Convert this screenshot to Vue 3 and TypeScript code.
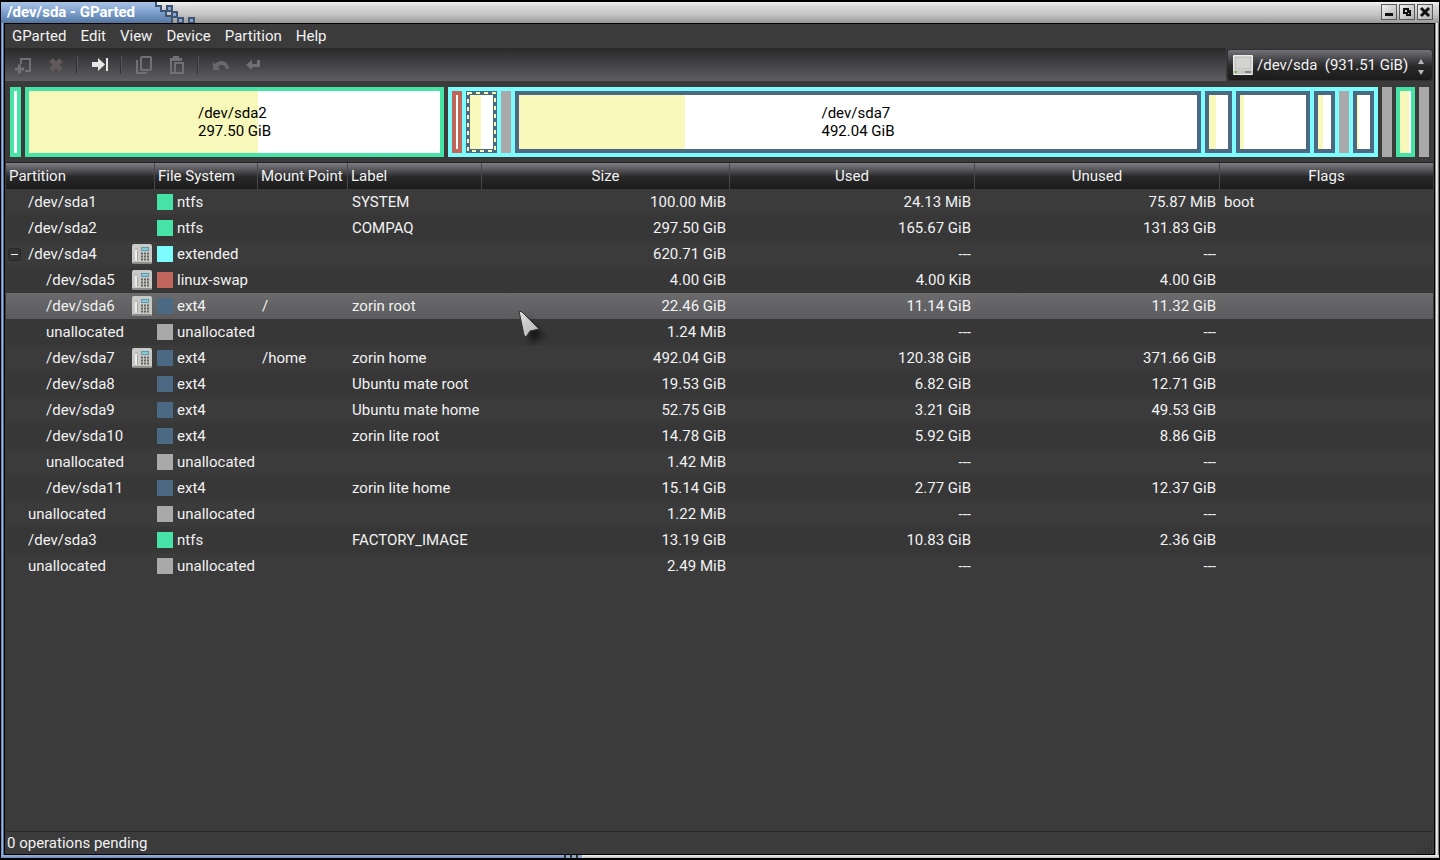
<script setup lang="ts">
import { computed, ref, shallowRef } from 'vue'

type FileSystem = 'ntfs' | 'extended' | 'linux-swap' | 'ext4' | 'unallocated'

interface Partition {
  name: string
  level: number
  locked?: boolean
  fs: FileSystem
  mount?: string
  label?: string
  size: string
  used: string
  unused: string
  flags?: string
}

interface Segment {
  id: string
  fs: FileSystem
  weight: number
  used?: number
  caption?: string
  size?: string
  selected?: boolean
  children?: Segment[]
}

const menus = ['GParted', 'Edit', 'View', 'Device', 'Partition', 'Help']

const segments: Segment[] = [
  { id: 'sda1', fs: 'ntfs', weight: 11 },
  { id: 'sda2', fs: 'ntfs', weight: 419, used: 55.7, caption: '/dev/sda2', size: '297.50 GiB' },
  {
    id: 'sda4',
    fs: 'extended',
    weight: 930,
    children: [
      { id: 'sda5', fs: 'linux-swap', weight: 10 },
      { id: 'sda6', fs: 'ext4', weight: 31, used: 48, selected: true },
      { id: 'free1', fs: 'unallocated', weight: 10 },
      { id: 'sda7', fs: 'ext4', weight: 686, used: 24.5, caption: '/dev/sda7', size: '492.04 GiB' },
      { id: 'sda8', fs: 'ext4', weight: 27, used: 36 },
      { id: 'sda9', fs: 'ext4', weight: 74, used: 6 },
      { id: 'sda10', fs: 'ext4', weight: 21, used: 40 },
      { id: 'free2', fs: 'unallocated', weight: 10 },
      { id: 'sda11', fs: 'ext4', weight: 21, used: 18 },
    ],
  },
  { id: 'free3', fs: 'unallocated', weight: 10 },
  { id: 'sda3', fs: 'ntfs', weight: 19, used: 82 },
  { id: 'free4', fs: 'unallocated', weight: 10 },
]

const partitions: Partition[] = [
  { name: '/dev/sda1', level: 0, fs: 'ntfs', label: 'SYSTEM', size: '100.00 MiB', used: '24.13 MiB', unused: '75.87 MiB', flags: 'boot' },
  { name: '/dev/sda2', level: 0, fs: 'ntfs', label: 'COMPAQ', size: '297.50 GiB', used: '165.67 GiB', unused: '131.83 GiB' },
  { name: '/dev/sda4', level: 0, locked: true, fs: 'extended', size: '620.71 GiB', used: '---', unused: '---' },
  { name: '/dev/sda5', level: 1, locked: true, fs: 'linux-swap', size: '4.00 GiB', used: '4.00 KiB', unused: '4.00 GiB' },
  { name: '/dev/sda6', level: 1, locked: true, fs: 'ext4', mount: '/', label: 'zorin root', size: '22.46 GiB', used: '11.14 GiB', unused: '11.32 GiB' },
  { name: 'unallocated', level: 1, fs: 'unallocated', size: '1.24 MiB', used: '---', unused: '---' },
  { name: '/dev/sda7', level: 1, locked: true, fs: 'ext4', mount: '/home', label: 'zorin home', size: '492.04 GiB', used: '120.38 GiB', unused: '371.66 GiB' },
  { name: '/dev/sda8', level: 1, fs: 'ext4', label: 'Ubuntu mate root', size: '19.53 GiB', used: '6.82 GiB', unused: '12.71 GiB' },
  { name: '/dev/sda9', level: 1, fs: 'ext4', label: 'Ubuntu mate home', size: '52.75 GiB', used: '3.21 GiB', unused: '49.53 GiB' },
  { name: '/dev/sda10', level: 1, fs: 'ext4', label: 'zorin lite root', size: '14.78 GiB', used: '5.92 GiB', unused: '8.86 GiB' },
  { name: 'unallocated', level: 1, fs: 'unallocated', size: '1.42 MiB', used: '---', unused: '---' },
  { name: '/dev/sda11', level: 1, fs: 'ext4', label: 'zorin lite home', size: '15.14 GiB', used: '2.77 GiB', unused: '12.37 GiB' },
  { name: 'unallocated', level: 0, fs: 'unallocated', size: '1.22 MiB', used: '---', unused: '---' },
  { name: '/dev/sda3', level: 0, fs: 'ntfs', label: 'FACTORY_IMAGE', size: '13.19 GiB', used: '10.83 GiB', unused: '2.36 GiB' },
  { name: 'unallocated', level: 0, fs: 'unallocated', size: '2.49 MiB', used: '---', unused: '---' },
]

const device = ref('sda')
const expanded = ref(true)
const selected = shallowRef(partitions[4])
const rows = computed(() => partitions.filter((p) => expanded.value || p.level === 0))

const tracks = (list: Segment[]) => list.map((s) => `minmax(0, ${s.weight}fr)`).join(' ')
</script>

<template>
  <div class="window">
    <header class="titlebar">
      <h1 class="title">/dev/sda - GParted</h1>
      <svg class="pixels" width="42" height="21" viewBox="0 0 42 21" aria-hidden="true">
        <defs>
          <linearGradient id="tab" x1="0" y1="0" x2="0" y2="1">
            <stop offset="0" stop-color="#a9c3e6" />
            <stop offset="0.5" stop-color="#7c9fce" />
            <stop offset="1" stop-color="#54769f" />
          </linearGradient>
        </defs>
        <path d="M0 0H2V4H7V9H12V14H17V21H0Z" fill="url(#tab)" />
        <path d="M1 0V4H6V9H11V14H17V21" fill="none" stroke="#3d5472" stroke-width="2" />
        <g fill="#83a5d0" stroke="#3d5472" stroke-width="2">
          <rect x="12" y="4" width="5" height="5" />
          <rect x="17" y="10" width="5" height="5" />
          <rect x="23" y="16" width="5" height="5" />
          <rect x="34" y="16" width="5" height="5" />
        </g>
      </svg>
      <div class="controls">
        <button type="button" aria-label="Minimize">
          <svg width="16" height="16" viewBox="0 0 16 16"><path d="M4 9H12V12H4Z" fill="#111" /></svg>
        </button>
        <button type="button" aria-label="Restore">
          <svg width="16" height="16" viewBox="0 0 16 16">
            <path d="M4 4H10V6H12V12H7V10H4Z" fill="#111" />
            <path d="M6 6H8V8H6ZM9 9H10V10H9Z" fill="#ccc" />
          </svg>
        </button>
        <button type="button" aria-label="Close">
          <svg width="16" height="16" viewBox="0 0 16 16"><path d="M4 4L12 12M12 4L4 12" stroke="#111" stroke-width="3" /></svg>
        </button>
      </div>
    </header>

    <main class="client">
      <nav class="menubar">
        <button v-for="m in menus" :key="m" type="button">{{ m }}</button>
      </nav>

      <div class="toolrow">
        <div class="toolbar">
          <button type="button" aria-label="New" disabled>
            <svg width="20" height="20" viewBox="0 0 20 20" fill="none" stroke="#717173" stroke-width="2">
              <path d="M8 9V4H17V16H12" /><path d="M2 14H11M6.500 9.500V18.500" stroke-width="3" />
            </svg>
          </button>
          <button type="button" aria-label="Delete" disabled>
            <svg width="20" height="20" viewBox="0 0 20 20"><path d="M5 5L15 15M15 5L5 15" stroke="#625a58" stroke-width="5" /></svg>
          </button>
          <span class="sep"></span>
          <button type="button" aria-label="Resize/Move">
            <svg width="20" height="20" viewBox="0 0 20 20" fill="#e6e6e6">
              <path d="M2 7H8V3L15 9.500L8 16V12H2Z" /><path d="M16 3H18V16H16Z" />
            </svg>
          </button>
          <span class="sep"></span>
          <button type="button" aria-label="Copy" disabled>
            <svg width="20" height="20" viewBox="0 0 20 20" fill="none" stroke="#717173" stroke-width="2">
              <rect x="7" y="2" width="10" height="13" rx="1" /><path d="M3 5V18H13" />
            </svg>
          </button>
          <button type="button" aria-label="Paste" disabled>
            <svg width="20" height="20" viewBox="0 0 20 20" fill="#717173">
              <path d="M3 3H6V1H12V3H15V6H5V17H8V19H3Z" />
              <path fill-rule="evenodd" d="M7 7H17V19H7ZM9 9V17H15V9Z" />
            </svg>
          </button>
          <span class="sep"></span>
          <button type="button" aria-label="Undo" disabled>
            <svg width="20" height="20" viewBox="0 0 20 20">
              <path d="M2 7V15H9L7 12C10 9 13 9 15 14L18 14C17 5 9 4 4 9Z" fill="#68686a" />
            </svg>
          </button>
          <button type="button" aria-label="Apply" disabled>
            <svg width="20" height="20" viewBox="0 0 20 20">
              <path d="M2 10L8 5V9H13V5H16V12H8V15Z" fill="#717173" />
            </svg>
          </button>
        </div>
        <div class="device">
          <svg class="disk" width="20" height="22" viewBox="0 0 20 22" aria-hidden="true">
            <rect x="0" y="1" width="20" height="20" rx="1" fill="#eeeeec" />
            <rect x="2" y="3" width="16" height="12" fill="#d3d3d1" stroke="#b4b4b2" />
            <path d="M0 16H20V20H0Z" fill="#c6c8c2" />
            <path d="M13 17V19M15 17V19M17 17V19" stroke="#444" />
            <rect x="2" y="17" width="2" height="2" fill="#73b13f" />
          </svg>
          <select v-model="device" aria-label="Device">
            <option value="sda">/dev/sda&nbsp;&nbsp;(931.51 GiB)</option>
          </select>
          <svg class="updown" width="8" height="18" viewBox="0 0 8 18" aria-hidden="true">
            <path d="M1 6L4 1L7 6ZM1 12H7L4 17Z" fill="#b9b9bb" />
          </svg>
        </div>
      </div>

      <section class="map" :style="{ gridTemplateColumns: tracks(segments) }" aria-label="Disk layout">
        <div v-for="s in segments" :key="s.id" class="seg" :class="s.fs">
          <div v-if="s.children" class="inner" :style="{ gridTemplateColumns: tracks(s.children) }">
            <div v-for="c in s.children" :key="c.id" class="seg" :class="c.fs">
              <div v-if="c.used" class="used" :style="{ width: c.used + '%' }"></div>
              <p v-if="c.caption" class="caption">{{ c.caption }}<br />{{ c.size }}</p>
              <svg v-if="c.selected" class="dashes" aria-hidden="true">
                <rect x="0" y="0" width="100%" height="100%" />
              </svg>
            </div>
          </div>
          <template v-else>
            <div v-if="s.used" class="used" :style="{ width: s.used + '%' }"></div>
            <p v-if="s.caption" class="caption">{{ s.caption }}<br />{{ s.size }}</p>
          </template>
        </div>
      </section>

      <div class="list">
        <table>
          <colgroup>
            <col class="c-name" /><col class="c-fs" /><col class="c-mount" /><col class="c-label" />
            <col class="c-size" /><col class="c-used" /><col class="c-used" /><col />
          </colgroup>
          <thead>
            <tr>
              <th>Partition</th><th>File System</th><th>Mount Point</th><th>Label</th>
              <th class="mid">Size</th><th class="mid">Used</th><th class="mid">Unused</th><th class="mid">Flags</th>
            </tr>
          </thead>
          <tbody>
            <tr v-for="(p, i) in rows" :key="i" :class="{ selected: p === selected }" @click="selected = p">
              <td>
                <div class="name" :class="{ child: p.level === 1 }">
                  <button
                    v-if="p.fs === 'extended'"
                    class="expander"
                    type="button"
                    aria-label="Toggle children"
                    :aria-expanded="expanded"
                    @click.stop="expanded = !expanded"
                  ></button>
                  <span>{{ p.name }}</span>
                  <svg v-if="p.locked" class="lock" width="20" height="20" viewBox="0 0 20 20" aria-hidden="true">
                    <rect x="0" y="0" width="20" height="20" rx="2" fill="#c9c9c7" />
                    <path d="M1 19H19" stroke="#8c8c8a" stroke-width="2" />
                    <path d="M4 6V16" stroke="#ececea" stroke-width="2" stroke-linecap="round" />
                    <path d="M5.500 7V16M3 5H6" stroke="#a4a4a2" />
                    <rect x="9.500" y="3.500" width="7" height="3" fill="#86cbdc" stroke="#5e9aab" />
                    <path d="M9 9.500H17M9 12.500H17M9 15.500H17" stroke="#62625f" stroke-width="2" stroke-dasharray="2 1" />
                  </svg>
                </div>
              </td>
              <td><div class="fs"><i :class="p.fs"></i>{{ p.fs }}</div></td>
              <td>{{ p.mount }}</td>
              <td>{{ p.label }}</td>
              <td class="num">{{ p.size }}</td>
              <td class="num">{{ p.used }}</td>
              <td class="num">{{ p.unused }}</td>
              <td>{{ p.flags }}</td>
            </tr>
          </tbody>
        </table>
      </div>

      <footer class="status">
        <span>0 operations pending</span>
        <svg class="grip" width="12" height="12" viewBox="0 0 12 12" aria-hidden="true">
          <path d="M10 1H11M7 4H8M10 4H11M4 7H5M7 7H8M10 7H11M1 10H2M4 10H5M7 10H8M10 10H11" stroke="#222" stroke-width="1" />
        </svg>
      </footer>
    </main>

    <div class="edge">
      <span class="edge-blue"></span><span class="edge-marks"></span><span class="edge-grey"></span>
    </div>

    <svg class="pointer" width="46" height="46" viewBox="0 0 46 46" aria-hidden="true">
      <defs>
        <filter id="soft" x="-50%" y="-50%" width="200%" height="200%"><feGaussianBlur stdDeviation="3" /></filter>
        <linearGradient id="arrow" x1="0" y1="0" x2="1" y2="1">
          <stop offset="0" stop-color="#e0e0e0" /><stop offset="1" stop-color="#b0b0b0" />
        </linearGradient>
      </defs>
      <path d="M7 7L27 27L20 28L14 35Z" fill="#000" opacity="0.600" filter="url(#soft)" />
      <path d="M1 1L4 2L21 19L12 21L8 27L6 25Z" fill="url(#arrow)" stroke="#333" stroke-linejoin="round" />
    </svg>
  </div>
</template>

<style>
html,
body {
  margin: 0;
  background: #000;
}
</style>

<style scoped>
* {
  box-sizing: border-box;
}
.window {
  position: relative;
  display: flex;
  flex-direction: column;
  height: 100vh;
  padding: 2px 1px 2px;
  background: #000;
  color: #f2f2f2;
  font: 15px/18px Roboto, 'Noto Sans', sans-serif;
  overflow: hidden;
}
button,
select {
  font: inherit;
  color: inherit;
  border: 0;
  background: none;
  padding: 0;
  margin: 0;
}
svg {
  display: block;
}
.titlebar {
  display: flex;
  flex: none;
  height: 21px;
  background: linear-gradient(#f4f4f4, #d9d9d9 20%, #c4c4c4 60%, #989898);
}
.title {
  margin: 0;
  width: 154px;
  padding-left: 6px;
  font-size: 15px;
  line-height: 20px;
  font-weight: 700;
  color: #fff;
  background: linear-gradient(#a9c3e6, #7c9fce 50%, #54769f);
  white-space: nowrap;
}
.controls {
  display: flex;
  gap: 2px;
  margin-left: auto;
  padding: 2px 6px 0 0;
}
.controls button {
  width: 16px;
  height: 16px;
  background: linear-gradient(135deg, #f2f2f2, #adadad);
  box-shadow: inset 0 0 0 1px #5a5a5a;
}
.client {
  display: flex;
  flex-direction: column;
  flex: 1;
  min-height: 0;
  border: 1px solid #000;
  margin: 0 4px 0 3px;
  background: #3b3b3c;
  position: relative;
  box-shadow: -1px 0 #4b6a92, -2px 0 #9ab8e0, -3px 0 #6c8bb8, 1px 0 #8a8a8a, 2px 0 #f0f0f0, 3px 0 #d5d5d5, 4px 0 #777;
}
.menubar {
  display: flex;
  gap: 14px;
  height: 24px;
  flex: none;
  padding-left: 7px;
}
.toolrow {
  display: flex;
  flex: none;
  height: 33px;
  justify-content: space-between;
}
.toolbar {
  display: flex;
  flex: 1;
  align-items: center;
  padding-left: 1px;
  background: linear-gradient(#29292a, #5e5e62);
}
.toolbar button {
  width: 33px;
  height: 33px;
  display: grid;
  place-items: center;
}
.sep {
  width: 11px;
  height: 18px;
  background: linear-gradient(90deg, transparent 4px, #343436 4px, #343436 5px, #545456 5px, #545456 6px, transparent 6px);
}
.device {
  position: relative;
  width: 204px;
  height: 30px;
  margin: 2px 2px 0;
  border-radius: 3px;
  background: linear-gradient(#737379, #48484c 30%, #29292a 55%, #1b1b1c);
  box-shadow: 0 0 0 1px #303031;
}
.device select {
  appearance: none;
  width: 100%;
  height: 30px;
  padding-left: 29px;
}
.disk {
  position: absolute;
  left: 5px;
  top: 4px;
}
.updown {
  position: absolute;
  right: 7px;
  top: 8px;
  pointer-events: none;
}
.map {
  display: grid;
  flex: none;
  gap: 4px;
  height: 70px;
  margin: 6px 5px 5px;
}
.inner {
  display: grid;
  gap: 4px;
  height: 100%;
}
.seg {
  position: relative;
  display: grid;
  min-width: 0;
  border: 4px solid;
  background: #fff;
}
.seg > * {
  grid-area: 1 / 1;
}
.seg.ntfs {
  border-color: #46e3a6;
}
.seg.extended {
  border-color: #7dfcfe;
  background: #7dfcfe;
}
.seg.linux-swap {
  border-color: #c1665a;
}
.seg.ext4 {
  border-color: #4b6983;
}
.seg.unallocated {
  border-color: #a9a9a9;
  background: #a9a9a9;
}
.used {
  background: #f8f8ba;
}
.caption {
  margin: 0;
  place-self: center;
  color: #000;
}
.dashes {
  position: absolute;
  left: -2px;
  top: -2px;
  width: calc(100% + 4px);
  height: calc(100% + 4px);
  overflow: visible;
}
.dashes rect {
  fill: none;
  stroke: #f8f8ba;
  stroke-width: 2px;
  stroke-dasharray: 4 4;
}
.list {
  flex: 1;
  min-height: 0;
  margin: 0 1px;
  border-top: 1px solid #222;
  border-bottom: 1px solid #292929;
  overflow: hidden;
}
table {
  width: 100%;
  table-layout: fixed;
  border-collapse: separate;
  border-spacing: 0;
}
.c-name {
  width: 149px;
}
.c-fs {
  width: 103px;
}
.c-mount {
  width: 90px;
}
.c-label {
  width: 134px;
}
.c-size {
  width: 248px;
}
.c-used {
  width: 245px;
}
th {
  height: 26px;
  padding: 0 3px;
  font-weight: 400;
  text-align: left;
  white-space: nowrap;
  border-right: 1px solid #48484a;
  background: linear-gradient(#7e7e84, #48484c 35%, #29292a 52%, #1b1b1c);
}
th:last-child {
  border-right: 0;
}
th.mid {
  text-align: center;
}
td {
  height: 26px;
  padding: 0 4px;
  white-space: nowrap;
}
td:nth-child(1) {
  padding: 0 3px 0 2px;
}
td:nth-child(2) {
  padding: 0 2px;
}
tbody tr:nth-child(even) {
  background: #373738;
}
tbody tr.selected {
  background: linear-gradient(#6b6b6d, #5b5b5d);
}
.num {
  text-align: right;
}
.name {
  position: relative;
  display: flex;
  align-items: center;
  padding-left: 20px;
}
.name.child {
  padding-left: 38px;
}
.lock {
  margin-left: auto;
}
.expander {
  position: absolute;
  left: 0;
  top: 4px;
  width: 13px;
  height: 13px;
  border-radius: 3px;
  box-shadow: inset 0 0 0 1px #29292a;
  background: linear-gradient(#eee, #eee) center / 7px 1px no-repeat #343435;
}
.fs {
  display: flex;
  align-items: center;
  gap: 4px;
}
.fs i {
  width: 16px;
  height: 16px;
}
.fs .ntfs {
  background: #46e3a6;
}
.fs .extended {
  background: #7dfcfe;
}
.fs .linux-swap {
  background: #c1665a;
}
.fs .ext4 {
  background: #4b6983;
}
.fs .unallocated {
  background: #a9a9a9;
}
.status {
  display: flex;
  flex: none;
  justify-content: space-between;
  align-items: center;
  height: 22px;
  padding: 0 1px 0 2px;
}
.grip {
  align-self: flex-end;
}
.edge {
  display: flex;
  flex: none;
  height: 3px;
}
.edge-blue {
  flex: 563;
  background: linear-gradient(#9ab8e0, #6c8bb8);
}
.edge-marks {
  flex: 18;
  background: repeating-linear-gradient(90deg, #333 0, #333 2px, #8fa9cc 2px, #8fa9cc 6px);
}
.edge-grey {
  flex: 857;
  background: linear-gradient(#f4f4f4, #bdbdbd);
}
.pointer {
  position: absolute;
  left: 518px;
  top: 310px;
  pointer-events: none;
}
</style>
